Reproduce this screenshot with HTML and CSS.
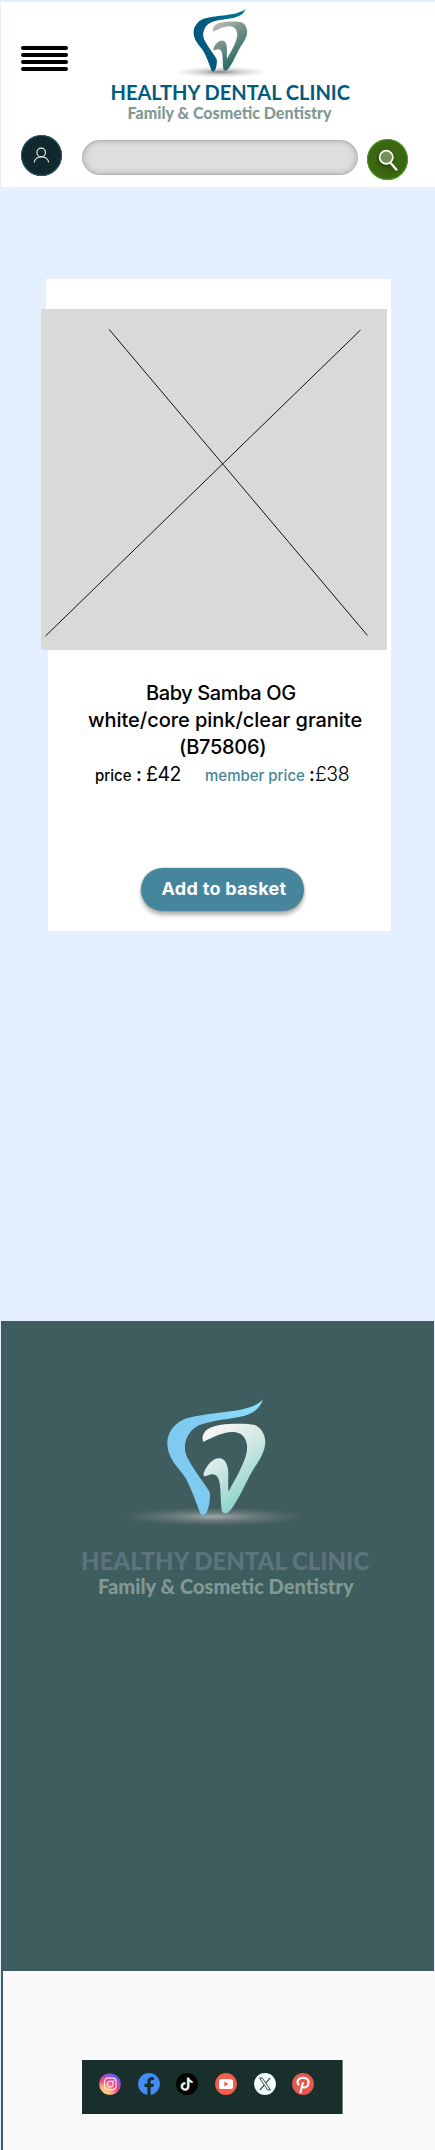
FILE: index.html
```html
<!DOCTYPE html>
<html lang="en">
<head>
<meta charset="utf-8">
<title>Healthy Dental Clinic</title>
<link rel="stylesheet" href="styles.css">
</head>
<body>
<svg class="defs" width="0" height="0" aria-hidden="true">
  <defs>
    <path id="tooth-left" d="M458 57C430 93 330 94 265 106C236 111 215 115 196 133C178 150 171 169 171 190C172 217 182 235 198 257C213 276 226 289 235 312C249 342 259 371 269 397C272 407 283 405 288 397C297 380 299 361 299 342C298 334 293 327 287 318C265 287 245 259 230 230C222 212 222 193 228 177C236 156 249 141 270 133C307 119 360 117 403 106C432 98 450 82 458 57Z"/>
    <path id="tooth-right" d="M280 184C275 180 276 166 280 160C290 139 325 133 355 131C385 129 418 130 434 134C452 143 464 161 465 184C465 211 449 237 433 261C414 291 402 321 387 348C374 371 362 392 350 398C341 401 336 397 334 389C330 362 332 332 328 308C325 291 317 281 304 282C295 283 289 288 283 288C279 286 278 282 281 276C288 257 307 234 326 234C342 233 350 249 353 267C356 289 351 312 355 334C366 311 383 284 393 261C405 235 412 215 410 195C407 169 392 156 368 155C339 154 307 171 280 184Z"/>
    <linearGradient id="deep" x1="0" y1="1" x2="1" y2="0"><stop offset=".5" stop-color="#005b7f"/><stop offset="1" stop-color="#00799a"/></linearGradient>
    <linearGradient id="sage" x1="0" y1="0" x2=".55" y2="1"><stop offset="0" stop-color="#c9c2b5"/><stop offset=".4" stop-color="#7f9791"/><stop offset="1" stop-color="#1c635e"/></linearGradient>
    <linearGradient id="sky" x1="0" y1="1" x2="1" y2="0"><stop offset=".5" stop-color="#7fcaf0"/><stop offset="1" stop-color="#8be3fc"/></linearGradient>
    <linearGradient id="mint" x1="0" y1="0" x2=".55" y2="1"><stop offset="0" stop-color="#fffafa"/><stop offset=".45" stop-color="#d7eae6"/><stop offset="1" stop-color="#86d0c9"/></linearGradient>
    <radialGradient id="shade"><stop offset="0" stop-color="#555" stop-opacity=".75"/><stop offset=".45" stop-color="#888" stop-opacity=".35"/><stop offset="1" stop-color="#aaa" stop-opacity="0"/></radialGradient>
    <radialGradient id="glow"><stop offset="0" stop-color="#c3c3c3" stop-opacity=".75"/><stop offset=".4" stop-color="#aaa" stop-opacity=".42"/><stop offset="1" stop-color="#888" stop-opacity="0"/></radialGradient>
    <radialGradient id="insta" cx=".2" cy="1" r="1.1"><stop offset="0" stop-color="#ffe27a"/><stop offset=".35" stop-color="#fbb07a"/><stop offset=".6" stop-color="#ec4a80"/><stop offset=".85" stop-color="#9a50cf"/><stop offset="1" stop-color="#3a62f0"/></radialGradient>
  </defs>
</svg>

<header class="header">
  <div class="top">
    <button class="menu" aria-label="Menu"><i></i><i></i><i></i><i></i></button>
    <div class="brand">
      <svg class="brand-mark" viewBox="20 50 560 400">
        <ellipse cx="318" cy="406" rx="260" ry="32" fill="url(#shade)"/>
        <use href="#tooth-left" fill="url(#deep)"/><use href="#tooth-right" fill="url(#sage)"/>
      </svg>
      <div class="brand-name">HEALTHY DENTAL CLINIC</div>
      <div class="brand-tag">Family &amp; Cosmetic Dentistry</div>
    </div>
  </div>
  <div class="tools">
    <button class="account" aria-label="Account">
      <svg viewBox="0 0 42 42" width="41" height="41" fill="none" stroke="#e8eeee" stroke-width="1.2"><circle cx="20.7" cy="17.8" r="4.4"/><path d="M13.6 28C14.3 20.6 27.5 20.6 28.3 28"/></svg>
    </button>
    <input class="search" type="text" aria-label="Search">
    <button class="find" aria-label="Find">
      <svg viewBox="0 0 42 42" width="41" height="41" fill="none" stroke="#fff"><circle cx="19.7" cy="18.7" r="6.8" stroke-width="1.7" fill="#76915a"/><path d="M24.3 24.5L30.6 32" stroke-width="2.4"/></svg>
    </button>
  </div>
</header>

<main class="main">
  <article class="card">
    <div class="card-top"></div>
    <svg class="photo" viewBox="0 0 346 341" stroke="#111" stroke-width="1"><path d="M68 20.300L326.500 326.500M319.500 21L4.500 327"/></svg>
    <div class="info">
      <h1 class="title"><span class="t1">Baby Samba OG</span><span class="t2">white/core pink/clear granite</span><span class="t3">(B75806)</span></h1>
      <div class="prices">
        <span class="label">price</span><span class="colon">:</span><span class="value">£42</span>
        <span class="label member">member price</span><span class="colon tight">:</span><span class="value light">£38</span>
      </div>
      <button class="add">Add to basket</button>
    </div>
  </article>
</main>

<footer class="footer">
  <svg class="footer-mark" viewBox="20 50 560 400">
    <ellipse cx="310" cy="409" rx="285" ry="29" fill="url(#glow)"/>
    <use href="#tooth-left" fill="url(#sky)"/><use href="#tooth-right" fill="url(#mint)"/>
  </svg>
  <div class="footer-name">HEALTHY DENTAL CLINIC</div>
  <div class="footer-tag">Family &amp; Cosmetic Dentistry</div>
</footer>

<section class="bottom">
  <nav class="social">
    <svg viewBox="0 0 22 22"><circle cx="11" cy="11" r="10.800" fill="url(#insta)"/><g fill="none" stroke="#ffdfe9" stroke-width="1.200"><rect x="5.600" y="5.200" width="11.400" height="11.400" rx="3"/><circle cx="11.200" cy="11" r="2.800"/></g><circle cx="14.400" cy="7.900" r=".8" fill="#ffdfe9"/></svg>
    <svg viewBox="0 0 22 22"><circle cx="11" cy="11" r="10.900" fill="#448bf6"/><path d="M9.400 22V14H6.500V10.700H9.400V8.500C9.400 5.500 11.200 4 13.800 4L16 4.200V7H14.400C13 7 12.600 7.800 12.600 8.700V10.700H15.900L15.300 14H12.600V22Z" fill="#182f2c"/></svg>
    <svg viewBox="0 0 22 22"><circle cx="11" cy="11" r="10.900" fill="#000"/><g fill="none" stroke-width="2"><path d="M12.800 5V13.400A3.200 3.200 0 1 1 9.800 10.500M12.800 5.500C13.200 8 14.600 9 16.900 9.200" stroke="#f05a68"/><path d="M11.800 4.600V13A3.200 3.200 0 1 1 8.800 10.100M11.800 5C12.200 7.500 13.600 8.500 15.900 8.700" stroke="#62dcda"/><path d="M12.300 4.800V13.200A3.200 3.200 0 1 1 9.300 10.300M12.300 5.200C12.700 7.700 14.100 8.700 16.400 8.900" stroke="#f3f6f6" stroke-width="1.500"/></g></svg>
    <svg viewBox="0 0 22 22"><circle cx="11" cy="11" r="10.900" fill="#f75c4c"/><rect x="4" y="6" width="14" height="10" rx="2.600" fill="#fff"/><path d="M9.300 8.500L13.500 11L9.300 13.500Z" fill="#f75c4c"/></svg>
    <svg viewBox="0 0 22 22"><circle cx="11" cy="11" r="10.900" fill="#f2fffc"/><g fill="none" stroke="#3c4b49"><path d="M5.500 5H8.300L16.500 17H13.700Z" stroke-width="1"/><path d="M16.200 4.800L11.700 10.100M10.300 12L5.800 17.200" stroke-width="1.200"/></g></svg>
    <svg viewBox="0 0 22 22"><circle cx="11" cy="11" r="10.900" fill="#e95850"/><path d="M8.300 20L11 9.200M7 12.400C3.700 8.600 6.500 4.700 11 4.700C15.300 4.700 17.400 7.800 16.300 11.200C15.400 14.400 12 15.600 10 13.400" fill="none" stroke="#fff" stroke-width="2.100"/></svg>
  </nav>
</section>
</body>
</html>
```

FILE: styles.css
```css
* { box-sizing: border-box; }

body {
  margin: 0;
  padding: 2px 0 0 1px;
  width: 435px;
  background: #e4f0ff;
  font-family: Inter, sans-serif;
  color: #000;
}

button { border: 0; padding: 0; font: inherit; background: none; }
svg { display: block; }
.defs { position: absolute; }

.header { height: 185px; background: #fff; }

.top { display: flex; height: 133px; }
.menu {
  display: flex;
  flex-direction: column;
  gap: 3px;
  width: 47px;
  height: 25px;
  margin: 44px 0 0 20px;
}
.menu i { width: 47px; height: 4px; border-radius: 2px; background: #000; }

.brand { width: 239px; margin-left: 42.500px; padding-top: 5px; white-space: nowrap; }
.brand-mark { width: 102.200px; height: 73px; margin-left: 55.500px; }
.brand-name {
  font: 700 20.050px/24px Lato, sans-serif;
  color: #005b7f;
}
.brand-tag {
  margin: -1px 0 0 17px;
  font: 900 16.050px/20px Lato, sans-serif;
  color: #7f9a94;
}

.tools { display: flex; }
.account {
  width: 41px;
  height: 41px;
  margin-left: 20px;
  border-radius: 50%;
  background: #11282e;
  box-shadow: inset 0 0 0 1px #2d5c70;
}
.search {
  width: 276px;
  height: 35px;
  margin: 5px 0 0 20px;
  padding: 0 16px;
  border: 1px solid #b1b1b1;
  border-radius: 18px;
  background: #dedede;
  box-shadow: inset 0 0 6px #aaa;
}
.find {
  width: 41px;
  height: 41px;
  margin: 4px 0 0 8.500px;
  border-radius: 50%;
  background: #3c6711;
  box-shadow: inset 0 0 0 1px #4da32a;
}
.find svg { filter: drop-shadow(-1px 2px 2px rgba(0, 0, 0, .4)); }

.main { height: 1134px; padding: 92px 0 0 40px; }
.card { width: 350px; }
.card-top { height: 30px; margin-left: 5px; background: #fff; }
.photo {
  width: 346px;
  height: 341px;
  background: #d9d9d9;
  box-shadow: 4px 0 #fff;
}
.info {
  height: 281px;
  margin-left: 7px;
  padding-top: 30px;
  background: #fff;
}
.title {
  display: flex;
  flex-direction: column;
  margin: 0;
  font-size: 20px;
  font-weight: 500;
  line-height: 27px;
  white-space: nowrap;
}
.t1 { margin-left: 98px; letter-spacing: -.4px; }
.t2 { margin-left: 40px; letter-spacing: -.040px; }
.t3 { margin-left: 131px; letter-spacing: -.3px; }

.prices {
  display: flex;
  align-items: baseline;
  padding-left: 47px;
  line-height: 27px;
  white-space: nowrap;
}
.label { width: 41px; font-size: 15px; font-weight: 500; }
.member { width: 104px; margin-left: 24px; color: #46869d; }
.colon { width: 10px; font-size: 19px; font-weight: 500; }
.tight { width: 6px; }
.value { width: 35px; font-size: 19.500px; letter-spacing: -.5px; }
.light { font-weight: 300; }

.add {
  display: block;
  width: 163px;
  height: 43px;
  margin: 79px 0 0 93px;
  padding: 0 0 2px 3px;
  border-radius: 22px;
  background: #46869d;
  box-shadow: 0 4px 4px rgba(0, 0, 0, .3), 0 0 1px 1px rgba(0, 0, 0, .12);
  color: #fff;
  font-size: 18px;
  font-weight: 700;
  letter-spacing: .3px;
}

.footer {
  width: 433px;
  height: 650px;
  padding-top: 76px;
  background: #3f5c5e;
  white-space: nowrap;
}
.footer-mark { width: 186.700px; height: 133.300px; margin-left: 115.700px; }
.footer-name {
  margin: 16px 0 0 80px;
  font: 900 24px/29px Lato, sans-serif;
  color: #5d747f;
}
.footer-tag {
  margin: -1px 0 0 97px;
  font: 900 20.080px/25px Lato, sans-serif;
  color: #7f9a94;
}

.bottom {
  height: 179px;
  padding: 89px 0 0 79px;
  border-left: 2px solid #3f5c5e;
  background: #fafafa;
}
.social {
  display: flex;
  gap: 16.600px;
  width: 261px;
  height: 54px;
  padding: 12.500px 0 0 17.200px;
  border-right: 1px solid #71827f;
  background: #182f2c;
}
.social svg { width: 22px; height: 22px; }
```
